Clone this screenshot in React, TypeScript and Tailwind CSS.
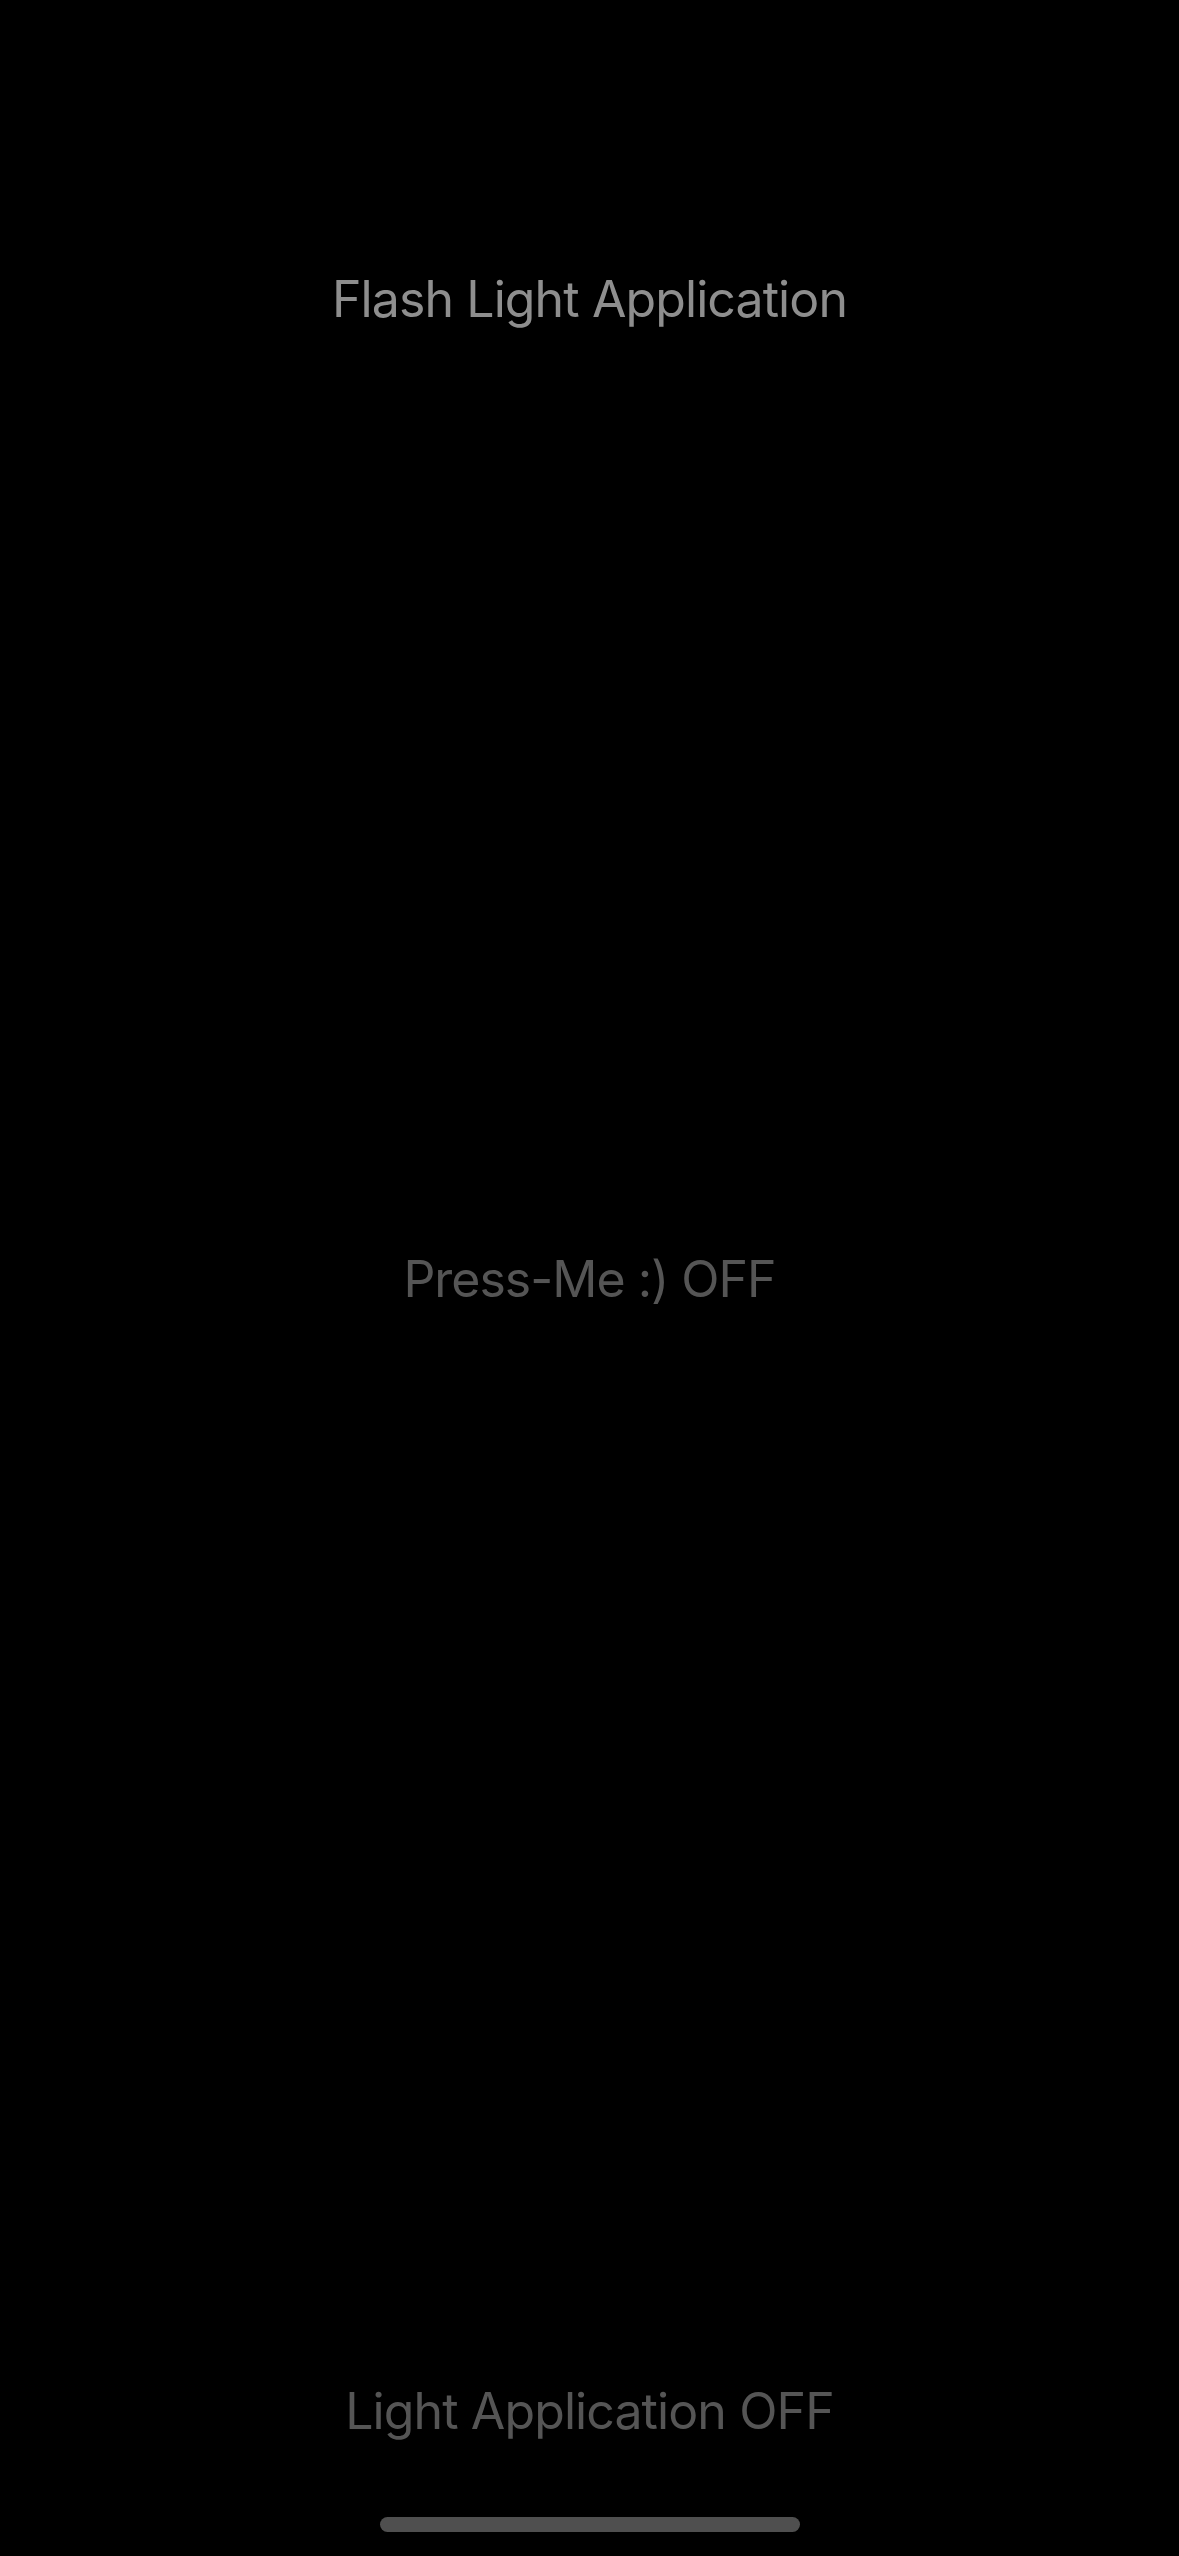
import React, { useState } from 'react';

const font = { fontFamily: 'Inter, "Noto Sans", sans-serif' };

export default function App() {
    const [isOn, setIsOn] = useState(false);

    return (
        <div className="h-[2556px] w-full bg-black flex flex-col items-center overflow-hidden" style={font}>
            <p className="pt-[269px] h-[329px] text-[50px] leading-[60px] text-[#8e8e8e] tracking-[-0.9px]">
                Flash Light Application
            </p>

            <button
                onClick={() => setIsOn(!isOn)}
                className="mt-[920px] h-[60px] text-[50px] leading-[60px] text-[#555555] tracking-[-1px]"
            >
                Press-Me :) {isOn ? 'ON' : 'OFF'}
            </button>

            <p className="mt-[1072px] h-[60px] text-[50px] leading-[60px] text-[#555555] tracking-[-0.9px]">
                Light Application {isOn ? 'ON' : 'OFF'}
            </p>

            <div className="mt-[76px] w-[420px] h-[15px] rounded-full bg-[#4f4f4f]" />
        </div>
    );
}
